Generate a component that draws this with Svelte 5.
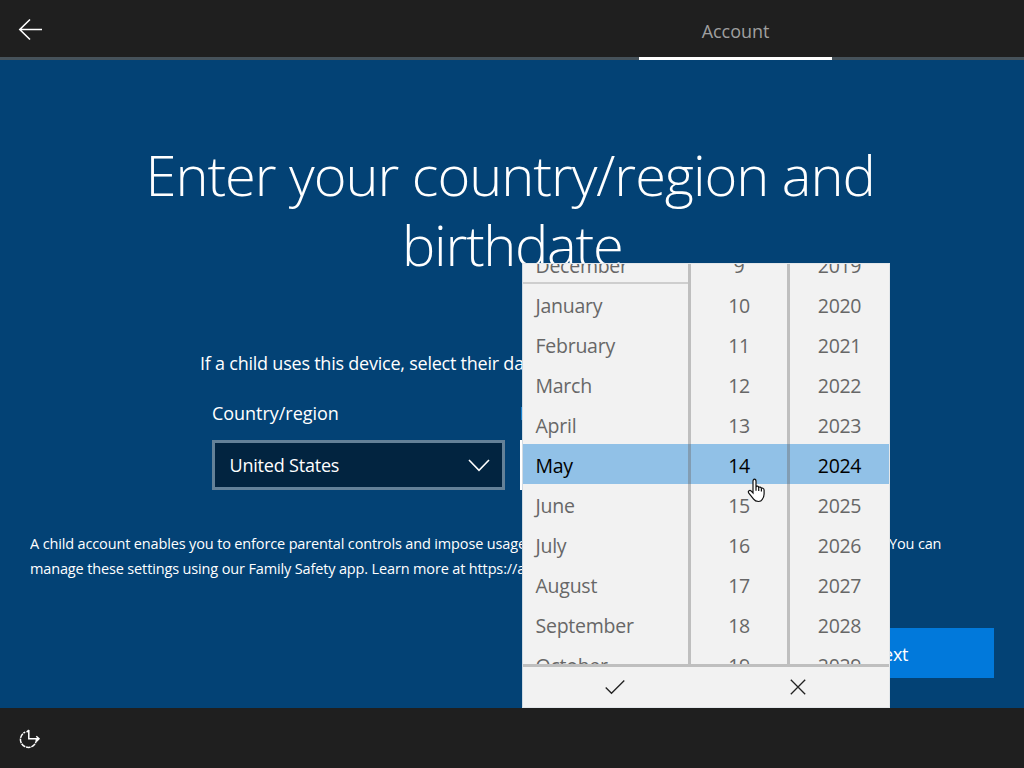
<script>
  const months = ['December', 'January', 'February', 'March', 'April', 'May', 'June', 'July', 'August', 'September', 'October'];
  const days = Array.from({ length: 11 }, (_, i) => i + 9);
  const years = Array.from({ length: 11 }, (_, i) => i + 2019);
  const selected = 5;
</script>

<div class="screen">
  <header>
    <button class="back" aria-label="Back">
      <svg width="26" height="24" viewBox="0 0 26 24"><path d="M24 11.5H2M12 1.5L1.8 11.5L12 21.5" /></svg>
    </button>
    <div class="tab">Account</div>
  </header>

  <main>
    <h1><span class="line1">Enter your country/region and</span><span class="line2">birthdate</span></h1>
    <p class="intro">If a child uses this device, select their da</p>
    <div class="fields">
      <div class="field">
        <span class="label">Country/region</span>
        <button class="select">
          <span>United States</span>
          <svg width="22" height="13" viewBox="0 0 22 13"><path d="M1 1L11 11.3L21 1" /></svg>
        </button>
      </div>
      <div class="field birth">
        <span class="label">B</span>
        <div class="datebox"></div>
      </div>
    </div>
    <div class="note">
      <div class="noteline"><span>A child account enables you to enforce parental controls and impose usage</span><span class="tail">You can</span></div>
      <div class="noteline"><span>manage these settings using our Family Safety app. Learn more at https://a</span></div>
    </div>
    <button class="next">Next</button>
  </main>

  <footer>
    <svg width="22" height="20" viewBox="0 0 22 20">
      <path d="M17.4 9.8A8 8 0 1 1 6.2 3.1" stroke-dasharray="4.6 .8" />
      <path d="M9.8 1V9.8H20M7.6 3.2L9.8 1M17.3 7.2L20 9.8L17.3 12.4" />
    </svg>
  </footer>

  <div class="picker">
    <div class="wheels">
      <div class="wheel month">
        {#each months as m, i}<div class="item" class:selected={i === selected} class:divider={i === 0}>{m}</div>{/each}
      </div>
      <div class="wheel day">
        {#each days as d, i}<div class="item" class:selected={i === selected}>{d}</div>{/each}
      </div>
      <div class="wheel year">
        {#each years as y, i}<div class="item" class:selected={i === selected}>{y}</div>{/each}
      </div>
    </div>
    <div class="actions">
      <button aria-label="Accept"><svg width="20" height="16" viewBox="0 0 20 16"><path d="M.7 8.5L6.5 14.3L19.3 1.5" /></svg></button>
      <button aria-label="Cancel"><svg width="16" height="16" viewBox="0 0 16 16"><path d="M.8 .8L15.2 15.2M15.2 .8L.8 15.2" /></svg></button>
    </div>
  </div>

  <svg class="cursor" width="19" height="25" viewBox="0 0 19 25">
    <path d="M6 15V3.3Q6 1.2 7.5 1.2T9 3.3V9Q9.3 7.9 10.5 8.2T11.7 9.9Q12 8.7 13.2 9.1T14.4 10.8Q14.7 9.8 15.9 10.2T17.1 12.1V16Q17.1 18.8 15.2 21.5Q14.2 23.5 11.5 23.5Q8.2 23.5 6.6 21.2L1.8 15.2Q.8 13.6 2 12.8T4.3 13.2Z" />
    <path d="M9 9V12.8M11.7 10V13M14.4 11V13.5" />
  </svg>
</div>

<style>
  :global(body) { margin: 0; overflow: hidden; }
  .screen { position: relative; width: 1024px; height: 768px; display: flex; flex-direction: column; overflow: hidden; background: #034275; color: #fff; font-family: "Open Sans", "Noto Sans", sans-serif; }
  .screen, .screen * { box-sizing: border-box; }
  button { font: inherit; color: inherit; border: 0; padding: 0; background: none; }
  svg { display: block; fill: none; stroke: #fff; stroke-width: 1.6; }
  header { height: 60px; flex: none; display: flex; justify-content: space-between; background: #1f1f1f; border-bottom: 3px solid #46525a; }
  .back { align-self: flex-start; margin: 18px 0 0 18px; }
  .tab { width: 193px; height: 60px; margin-right: 192px; border-bottom: 3px solid #fff; text-align: center; font-size: 18px; line-height: 62px; color: #9f9f9f; letter-spacing: -.05px; }
  main { flex: 1; display: flex; flex-direction: column; min-height: 0; }
  h1 { margin: 79px 0 0; display: flex; flex-direction: column; font-weight: 300; font-size: 56px; line-height: 70px; white-space: nowrap; }
  .line1 { margin-left: 145.5px; letter-spacing: -1.04px; }
  .line2 { margin-left: 402px; letter-spacing: -1.3px; }
  .intro { margin: 69px 0 0 200px; font-size: 18px; line-height: 30px; width: 323px; overflow: hidden; white-space: nowrap; letter-spacing: -.23px; }
  .fields { display: flex; gap: 15px; margin: 20px 0 0 212px; }
  .field { width: 293px; }
  .label { display: block; font-size: 18px; line-height: 30px; letter-spacing: -.04px; }
  .select { margin-top: 12px; width: 293px; height: 50px; border: 3px solid #648198; background: #022440; display: flex; align-items: center; justify-content: space-between; padding: 0 12px 0 14.5px; font-size: 18px; letter-spacing: -.2px; }
  .birth { width: 20px; overflow: hidden; }
  .datebox { margin-top: 12px; height: 50px; background: #fff; }
  .note { margin: 41px 0 0 30px; font-size: 14.5px; line-height: 25px; white-space: nowrap; letter-spacing: -.145px; }
  .noteline { display: flex; height: 25px; }
  .noteline > span:first-child { width: 494px; overflow: hidden; }
  .tail { margin-left: 365px; }
  .next { margin: 47px 30px 0 auto; padding-top: 2px; width: 210px; height: 50px; background: #0179db; font-size: 18px; letter-spacing: -.2px; }
  footer { height: 60px; flex: none; background: #1f1f1f; padding: 21px 0 0 19px; }
  footer svg { stroke-width: 1.5; }
  .picker { position: absolute; left: 522px; top: 263px; width: 368px; height: 445px; background: #f2f2f2; border: 1px solid #e3e7ea; border-left-color: #cfdae3; color: #676767; display: flex; flex-direction: column; }
  .wheels { height: 403px; flex: none; display: flex; overflow: hidden; border-bottom: 3px solid #bfbfbf; }
  .wheel { margin-top: -20px; text-align: center; font-size: 19.5px; letter-spacing: -.3px; }
  .month { width: 168px; text-align: left; border-right: 3px solid #bfbfbf; letter-spacing: -.25px; }
  .month .item { padding-left: 12.5px; }
  .day { width: 99px; border-right: 3px solid #bfbfbf; }
  .year { flex: 1; }
  .item { height: 40px; line-height: 44px; }
  .item.selected { background: #91c1e7; color: #000; box-shadow: 3px 0 #829db3; }
  .year .item.selected { box-shadow: none; }
  .item.divider { border-bottom: 2px solid #cecece; }
  .actions { flex: 1; display: flex; }
  .actions button { flex: 1; display: flex; align-items: center; justify-content: center; }
  .actions svg { stroke: #222; stroke-width: 1.3; }
  .cursor { position: absolute; left: 747px; top: 478px; fill: #fff; stroke: #111; stroke-width: 1.2; }
</style>
